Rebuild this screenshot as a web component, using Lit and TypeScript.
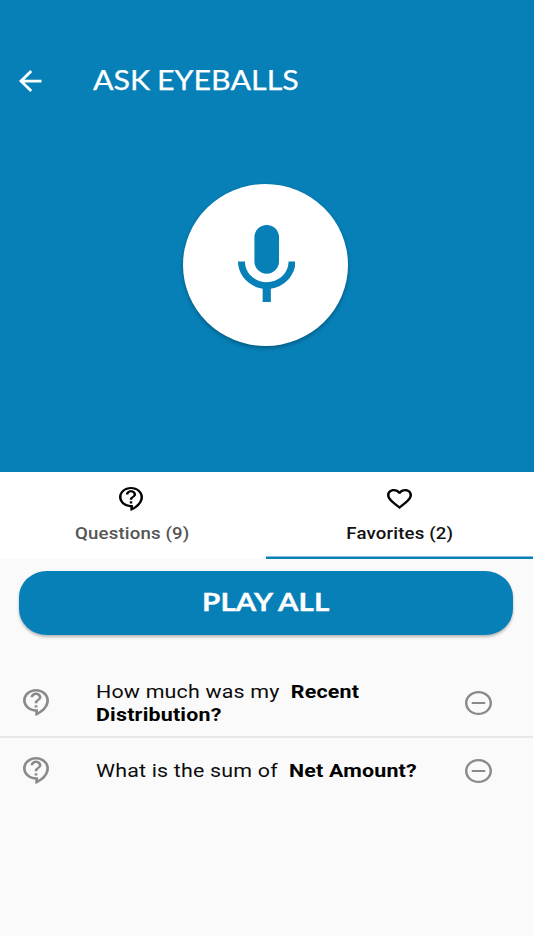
import { LitElement, html, css, svg } from "lit";
import { customElement, property } from "lit/decorators.js";

const shapes: Record<string, { box: string; d: string }> = {
  back: { box: "4 4 16 16", d: "M20 11H7.83l5.59-5.59L12 4l-8 8 8 8 1.41-1.41L7.83 13H20v-2z" },
  mic: {
    box: "5 2 14 19",
    d: "M12 14c1.66 0 2.99-1.34 2.99-3L15 5c0-1.66-1.34-3-3-3S9 3.34 9 5v6c0 1.66 1.34 3 3 3zm5.3-3c0 3-2.54 5.1-5.3 5.1S6.7 14 6.7 11H5c0 3.41 2.72 6.23 6 6.72V21h2v-3.28c3.28-.48 6-3.3 6-6.72h-1.7z",
  },
  question: {
    box: "2 1 19 22.59",
    d: "M11 23.59v-3.6c-5.01-.26-9-4.42-9-9.49C2 5.26 6.26 1 11.5 1S21 5.26 21 10.5c0 4.95-3.44 9.93-8.57 12.4l-1.43.69zM11.5 3C7.36 3 4 6.36 4 10.5S7.36 18 11.5 18H13v2.3c3.64-2.3 6-6.08 6-9.8C19 6.36 15.64 3 11.5 3zm-1 11.5h2v2h-2zm2-1.5h-2c0-3.25 3-3 3-5 0-1.1-.9-2-2-2s-2 .9-2 2h-2c0-2.21 1.79-4 4-4s4 1.79 4 4c0 2.5-3 2.75-3 5z",
  },
  heart: {
    box: "2 3 20 18.35",
    d: "M16.5 3c-1.74 0-3.41.81-4.5 2.09C10.91 3.81 9.24 3 7.5 3 4.42 3 2 5.42 2 8.5c0 3.78 3.4 6.86 8.55 11.54L12 21.35l1.45-1.32C18.6 15.36 22 12.28 22 8.5 22 5.42 19.58 3 16.5 3zm-4.4 15.55l-.1.1-.1-.1C7.14 14.24 4 11.39 4 8.5 4 6.5 5.5 5 7.5 5c1.54 0 3.04.99 3.57 2.36h1.87C13.46 5.99 14.96 5 16.5 5c2 0 3.5 1.5 3.5 3.5 0 2.89-3.14 5.74-7.9 10.05z",
  },
  minus: {
    box: "2 2 20 20",
    d: "M7 11.1v1.8h10v-1.8H7zm5-9.1C6.48 2 2 6.48 2 12s4.48 10 10 10 10-4.48 10-10S17.52 2 12 2zm0 18.2c-4.53 0-8.2-3.67-8.2-8.2S7.47 3.8 12 3.8s8.2 3.67 8.2 8.2-3.67 8.2-8.2 8.2z",
  },
};

@customElement("ui-icon")
class UiIcon extends LitElement {
  @property() name = "back";
  static styles = css`
    :host { display: block; flex: none; }
    .glyph { display: block; width: 100%; height: 100%; fill: currentColor; }
  `;
  render() {
    const s = shapes[this.name];
    return html`<svg class="glyph" viewBox=${s.box} preserveAspectRatio="none" aria-hidden="true">${svg`<path d=${s.d}></path>`}</svg>`;
  }
}

@customElement("question-row")
class QuestionRow extends LitElement {
  @property() lead = "";
  @property() subject = "";
  static styles = css`
    :host { display: flex; align-items: center; padding: 0 40.5px 0 22.5px; color: #8a8a8a; }
    .help { width: 26px; height: 27px; }
    .minus { width: 27px; height: 24px; }
    .cell { flex: 1; margin-left: 47.5px; }
    .text {
      width: 300px; margin: 2px 0 0; color: #0c0c0c;
      font: 400 19.2px/22.5px Roboto, sans-serif; letter-spacing: 0.18px;
      transform: scaleX(1.115); transform-origin: left;
    }
    .subject { font-weight: 700; color: #000; }
    .gap { margin-left: 5px; }
  `;
  render() {
    const words = this.subject.split(" ");
    return html`<ui-icon class="help" name="question"></ui-icon>
      <div class="cell"><p class="text"><span>${this.lead}</span>${words.map(
        (w, i) => html` <b class=${i === 0 ? "subject gap" : "subject"}>${w}</b>`
      )}</p></div>
      <ui-icon class="minus" name="minus"></ui-icon>`;
  }
}

@customElement("app-root")
class AppRoot extends LitElement {
  static styles = css`
    :host { display: block; width: 534px; height: 950px; background: #fff; overflow: hidden; }
    * { box-sizing: border-box; }
    .hero { height: 471.5px; background: #0780b8; color: #fff; display: flex; flex-direction: column; align-items: center; }
    .bar { width: 100%; height: 184px; padding: 60px 0 0 19px; display: flex; align-items: flex-start; }
    .back { width: 22.5px; height: 22px; margin-top: 9.5px; }
    .title {
      margin: 0 0 0 51.5px; font: 400 27px/40px Lato, sans-serif; white-space: nowrap; word-spacing: -1px;
      transform: scaleX(1.127); transform-origin: left;
      -webkit-text-stroke: 0.25px #fff;
    }
    .talk {
      width: 165px; height: 162px; margin-right: 2.5px; padding: 0; border: 0; border-radius: 50%;
      background: #fff; color: #0780b8; display: flex; justify-content: center; align-items: center;
      box-shadow: 0 2px 4px rgba(0, 0, 0, 0.3);
    }
    .mic { width: 57.5px; height: 77px; margin: 0 0 3px 1px; }
    .tabs { height: 87.5px; display: grid; grid-template-columns: 266px 266.5px; background: #fff; }
    .tab { display: flex; flex-direction: column; align-items: center; padding-top: 15.5px; color: #000; }
    .tab.active { box-shadow: inset 0 -2.5px #0780b8; }
    .tabicon { width: 24px; height: 24px; margin-right: 4px; }
    .tabicon.wide { width: 25px; height: 20px; margin: 2px 0; }
    .label {
      margin: 11.5px 2px 0 0; font: 500 17px/20px Roboto, sans-serif; letter-spacing: 0.15px; color: #555;
      transform: scaleX(1.095); white-space: nowrap;
    }
    .active .label { color: #111; margin-right: -1px; }
    .body { width: 532.5px; height: 377px; background: #fafafa; padding-top: 12px; }
    .play {
      display: flex; align-items: center; justify-content: center; width: 494.5px; height: 64px; margin-left: 18.5px;
      padding: 0 0 2px; border: 0; border-radius: 28px / 26px; background: #0780b8; color: #fff;
      font: 700 24px/30px Lato, sans-serif; box-shadow: 0 2px 3px rgba(0, 0, 0, 0.28);
    }
    .caption { transform: scaleX(1.23); -webkit-text-stroke: 0.3px #fff; }
    .list { margin-top: 34px; }
    .first { height: 69px; border-bottom: 2px solid #e8e8e8; }
    .second { height: 65px; }
  `;
  render() {
    return html`
      <header class="hero">
        <div class="bar"><ui-icon class="back" name="back"></ui-icon><h1 class="title">ASK EYEBALLS</h1></div>
        <button class="talk" aria-label="Speak"><ui-icon class="mic" name="mic"></ui-icon></button>
      </header>
      <nav class="tabs">
        <div class="tab"><ui-icon class="tabicon" name="question"></ui-icon><span class="label">Questions (9)</span></div>
        <div class="tab active"><ui-icon class="tabicon wide" name="heart"></ui-icon><span class="label">Favorites (2)</span></div>
      </nav>
      <main class="body">
        <button class="play"><span class="caption">PLAY ALL</span></button>
        <div class="list">
          <question-row class="first" lead="How much was my" subject="Recent Distribution?"></question-row>
          <question-row class="second" lead="What is the sum of" subject="Net Amount?"></question-row>
        </div>
      </main>`;
  }
}
